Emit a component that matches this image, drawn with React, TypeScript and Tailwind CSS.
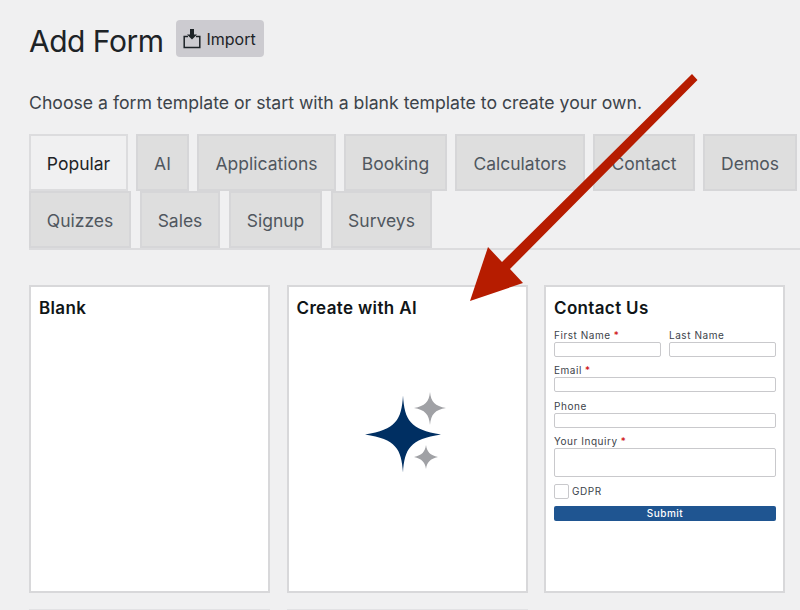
const font = "font-['Inter','Liberation_Sans',sans-serif]"

const rowOne = [
  { label: "Popular", width: "w-[99px]", active: true },
  { label: "AI", width: "w-[53px]" },
  { label: "Applications", width: "w-[139px]" },
  { label: "Booking", width: "w-[103px]" },
  { label: "Calculators", width: "w-[130px]" },
  { label: "Contact", width: "w-[102px]" },
  { label: "Demos", width: "w-[94px]" },
]

const rowTwo = [
  { label: "Quizzes", width: "w-[102px]" },
  { label: "Sales", width: "w-[80px]" },
  { label: "Signup", width: "w-[93px]" },
  { label: "Surveys", width: "w-[101px]" },
]

function Tab({ label, width, active }: { label: string; width: string; active?: boolean }) {
  return (
    <div
      className={`${width} h-[57px] pt-[3px] flex items-center justify-center border-2 text-[17.5px] ${
        active
          ? "border-[#dcdcde] bg-[#f0f0f1] text-[#1d2327]"
          : "border-[#d6d6d8] bg-[#dedede] text-[#50575e]"
      }`}
    >
      {label}
    </div>
  )
}

function Field({ label, required, tall }: { label: string; required?: boolean; tall?: boolean }) {
  return (
    <div className="flex-1 min-w-0">
      <div className="h-[14px] text-[10px] leading-[14px] tracking-[0.55px] text-[#3c434a]">
        {label}
        {required && <span className="text-[#c00] ml-[3px]">*</span>}
      </div>
      <div className={`${tall ? "h-[29px]" : "h-[15px]"} rounded-[2px] border border-[#c9c9cc] bg-white`} />
    </div>
  )
}

function Card({ title, children }: { title: string; children?: React.ReactNode }) {
  return (
    <div className="w-[241px] h-[308px] shrink-0 border-2 border-[#d8d8da] bg-white px-2 pt-[9px]">
      <h2 className="text-[17px] leading-[24px] font-semibold tracking-[0.35px] text-[#101517]">{title}</h2>
      {children}
    </div>
  )
}

export default function App() {
  return (
    <div className={`${font} relative w-[800px] h-[610px] overflow-hidden bg-[#f0f0f1] pl-[29px]`}>
      {/* Header */}
      <div className="flex items-start gap-[13px] pt-[20px]">
        <h1 className="mt-[2px] text-[30px] leading-[38px] tracking-[-0.5px] text-[#1d2327]">Add Form</h1>
        <div className="flex items-center gap-[5px] h-[37px] w-[88px] pl-[7px] rounded-[4px] bg-[#cccbd0] text-[16px] text-[#1d2327]">
          <svg width="18" height="21" viewBox="0 0 18 21" fill="none">
            <path d="M5 8.5H1.2V19.5H16.8V8.5H13" stroke="#1d2327" strokeWidth="1.5" />
            <path d="M7 1H11V6.5H14L9 11.5L4 6.5H7Z" fill="#1d2327" />
          </svg>
          Import
        </div>
      </div>

      <p className="mt-[31px] text-[17.65px] leading-[24px] text-[#3c434a]">
        Choose a form template or start with a blank template to create your own.
      </p>

      {/* Tabs */}
      <div className="mt-[19px] border-b-2 border-[#dcdcde]">
        <div className="flex gap-2">
          {rowOne.map((tab) => (
            <Tab key={tab.label} {...tab} />
          ))}
        </div>
        <div className="flex gap-[9px]">
          {rowTwo.map((tab) => (
            <Tab key={tab.label} {...tab} />
          ))}
        </div>
      </div>

      {/* Template cards */}
      <div className="mt-[35px] flex gap-[16.5px]">
        <Card title="Blank" />
        <Card title="Create with AI">
          <div className="flex justify-center mt-[69px] pr-[1px]">
            <svg width="84" height="84" viewBox="0 0 84 84">
              <path d="M38 6.5C39.5 31 45 40.5 76 45.5C45 50 39.5 60 38 83.5C36.5 60 31 50 0 45.5C31 40.5 36.5 31 38 6.5Z" fill="#002f62" />
              <path d="M65 3C66 13 70 17 81 19C70 21 66 25 65 36C64 25 60 21 49 19C60 17 64 13 65 3Z" fill="#a0a1a5" />
              <path d="M61 56C62 63 65 66 73 68C65 70 62 73 61 80C60 73 57 70 49 68C57 66 60 63 61 56Z" fill="#a0a1a5" />
            </svg>
          </div>
        </Card>
        <Card title="Contact Us">
          <div className="mt-[8px] mr-[-1px] flex flex-col gap-[6.3px]">
            <div className="flex gap-2">
              <Field label="First Name" required />
              <Field label="Last Name" />
            </div>
            <Field label="Email" required />
            <Field label="Phone" />
            <Field label="Your Inquiry" required tall />
            <div className="flex items-center gap-[3px] mt-[1px]">
              <div className="w-[15px] h-[15px] rounded-[2px] border border-[#c9c9cc] bg-white" />
              <span className="text-[10px] tracking-[0.55px] text-[#3c434a]">GDPR</span>
            </div>
            <div className="mt-[1px] h-[15px] rounded-[2px] bg-[#1f5591] text-center text-[10px] leading-[15px] font-medium tracking-[0.5px] text-white">
              Submit
            </div>
          </div>
        </Card>
      </div>

      {/* Next row of cards, cut off by the window */}
      <div className="mt-[16px] flex gap-[16.5px]">
        <div className="w-[241px] h-[20px] border-t-2 border-[#e2e2e4]" />
        <div className="w-[241px] h-[20px] border-t-2 border-[#e2e2e4]" />
      </div>

      {/* Annotation arrow */}
      <svg className="absolute left-0 top-0" width="800" height="610" viewBox="0 0 800 610">
        <path d="M692 74L697.5 80L510 269L523 283L470 301L488 247L502 262Z" fill="#b61c00" />
      </svg>
    </div>
  )
}
